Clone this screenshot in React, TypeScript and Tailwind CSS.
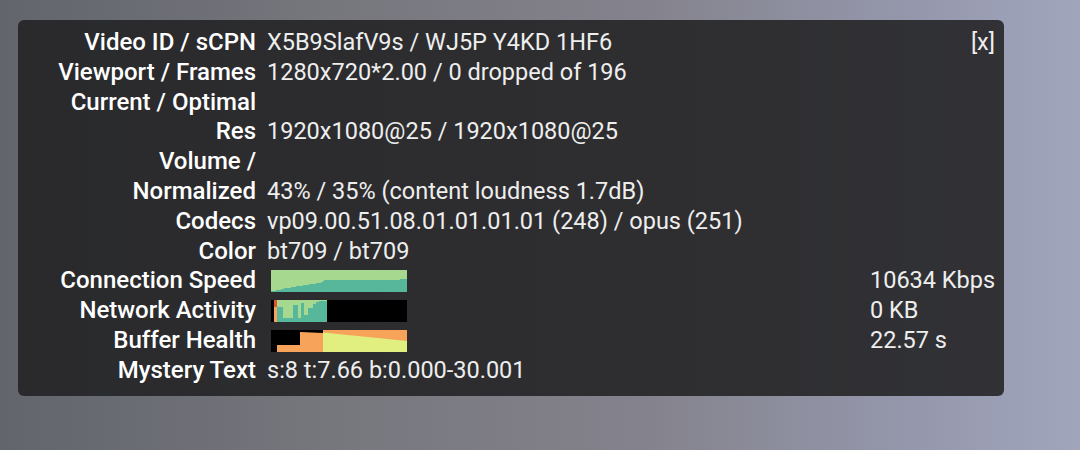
import React from 'react';

// Stats-for-nerds style overlay panel

const GREEN = '#a6d88f';
const TEAL = '#56b79a';
const ORANGE = '#f7a35a';
const YELLOW = '#e0ef80';
const RED = '#e0532c';

function ConnectionGraph() {
	return (
		<svg width="136" height="22" viewBox="0 0 136 22" className="block">
			<rect x="0" y="0" width="136" height="22" fill={GREEN} />
			<polygon
				fill={TEAL}
				points="0,22 0,21 5,21 5,20 10,20 10,19 13,19 13,18 20,18 20,17 25,17 25,16 32,16 32,15 38,15 38,14 45,14 45,13 50,13 50,12 52,12 52,11 53,11 53,10 129,10 129,9 136,9 136,22"
			/>
		</svg>
	);
}

function NetworkGraph() {
	const cols: [number, number, number][] = [
		[6, 12, 7],
		[12, 22, 18],
		[22, 27, 5],
		[27, 30, 18],
		[30, 33, 3],
		[33, 37, 15],
		[37, 42, 8],
		[42, 45, 4],
		[45, 48, 2],
		[48, 56, 1],
	];
	return (
		<svg width="136" height="22" viewBox="0 0 136 22" className="block">
			<rect x="0" y="0" width="136" height="22" fill="#000" />
			<rect x="6" y="0" width="50" height="22" fill={GREEN} />
			{cols.map(([x1, x2, top]) => (
				<rect key={x1} x={x1} y={top} width={x2 - x1} height={22 - top} fill={TEAL} />
			))}
			<rect x="3" y="0" width="3" height="7" fill={RED} />
			<rect x="3" y="7" width="3" height="15" fill={ORANGE} />
		</svg>
	);
}

function BufferGraph() {
	return (
		<svg width="136" height="22" viewBox="0 0 136 22" className="block">
			<rect x="0" y="0" width="136" height="22" fill="#000" />
			<polygon fill={ORANGE} points="6,22 6,15 29,15 29,2 52,3 52,22" />
			<rect x="52" y="0" width="84" height="22" fill={YELLOW} />
			<polygon fill={ORANGE} points="52,0 136,0 136,11 52,2.5" />
		</svg>
	);
}

type Row = { label: string; value?: string; graph?: React.ReactNode; side?: string };

const ROWS: Row[] = [
	{ label: 'Video ID / sCPN', value: 'X5B9SlafV9s / WJ5P Y4KD 1HF6' },
	{ label: 'Viewport / Frames', value: '1280x720*2.00 / 0 dropped of 196' },
	{ label: 'Current / Optimal' },
	{ label: 'Res', value: '1920x1080@25 / 1920x1080@25' },
	{ label: 'Volume /' },
	{ label: 'Normalized', value: '43% / 35% (content loudness 1.7dB)' },
	{ label: 'Codecs', value: 'vp09.00.51.08.01.01.01.01 (248) / opus (251)' },
	{ label: 'Color', value: 'bt709 / bt709' },
	{ label: 'Connection Speed', graph: <ConnectionGraph />, side: '10634 Kbps' },
	{ label: 'Network Activity', graph: <NetworkGraph />, side: '0 KB' },
	{ label: 'Buffer Health', graph: <BufferGraph />, side: '22.57 s' },
	{ label: 'Mystery Text', value: 's:8 t:7.66 b:0.000-30.001' },
];

export default function App(): React.ReactElement {
	return (
		<div
			className="w-[1080px] h-[450px] overflow-hidden bg-[linear-gradient(90deg,#62656c_0%,#76767d_30%,#84838d_60%,#9598ad_85%,#a1a5bb_100%)] pt-[20px] pl-[18px]"
			style={{ fontFamily: 'Roboto, "Noto Sans", sans-serif' }}
		>
			<div className="relative w-[986px] h-[376px] rounded-[6px] bg-[rgba(33,33,35,0.87)] pt-[8px] text-[23.5px] leading-[29.8px]">
				<span className="absolute top-[8px] right-[9px] text-[#eeeeee]">[x]</span>
				{ROWS.map((row) => (
					<div key={row.label} className="flex h-[29.8px] items-center">
						<div className="w-[238px] shrink-0 text-right text-[24px] font-medium text-white whitespace-nowrap">
							{row.label}
						</div>
						<div className="ml-[11px] flex items-center text-[#eeeeee] whitespace-nowrap">
							{row.graph ? (
								<>
									<div className="w-[603px] pl-[4px]">{row.graph}</div>
									<span>{row.side}</span>
								</>
							) : (
								<span>{row.value}</span>
							)}
						</div>
					</div>
				))}
			</div>
		</div>
	);
}
